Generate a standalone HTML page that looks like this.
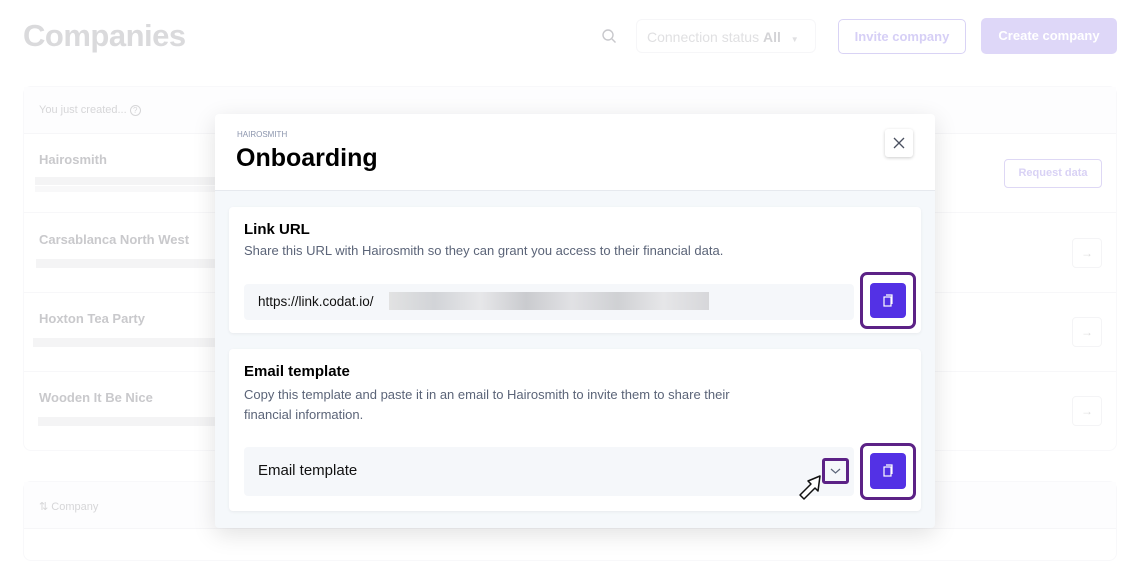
<!DOCTYPE html>
<html><head><style>
*{box-sizing:border-box;margin:0;padding:0}
body{width:1142px;height:547px;overflow:hidden;background:#fff;font-family:"Liberation Sans",sans-serif;position:relative}
.a{position:absolute}
.blur{background:#ececef;opacity:.6}
</style></head><body>
<div class="a" style="left:23px;top:18px;font-size:31px;font-weight:bold;color:#dadadc;letter-spacing:-0.5px">Companies</div>
<svg class="a" style="left:601px;top:28px" width="16" height="16" viewBox="0 0 16 16"><circle cx="7" cy="7" r="5" fill="none" stroke="#c8c8cc" stroke-width="1.4"/><path d="M11 11l3.5 3.5" stroke="#c8c8cc" stroke-width="1.4"/></svg>
<div class="a" style="left:636px;top:19px;width:180px;height:34px;border:1px solid #f6f6f8;border-radius:6px;font-size:14px;color:#e0e0e2;padding:9px 10px">Connection status <b style="color:#d3d3d6">All</b> <span style="font-size:8px;margin-left:6px">▼</span></div>
<div class="a" style="left:838px;top:19px;width:128px;height:35px;border:1px solid #d9d3f5;border-radius:5px;font-size:13px;font-weight:bold;color:#d6cff6;text-align:center;line-height:33px">Invite company</div>
<div class="a" style="left:981px;top:18px;width:136px;height:36px;background:#ded7f8;border-radius:5px;font-size:13px;font-weight:bold;color:#fff;text-align:center;line-height:36px">Create company</div>

<div class="a" style="left:23px;top:86px;width:1094px;height:365px;border:1px solid #f8f8fa;border-radius:8px">
 <div style="height:47px;border-bottom:1px solid #f6f6f8;background:#fdfdfe;font-size:11px;color:#d6d6d8;padding:17px 15px">You just created... <span style="display:inline-block;width:11px;height:11px;border:1px solid #d6d6d8;border-radius:50%;font-size:8px;text-align:center;line-height:9px">?</span></div>
</div>
<div class="a" style="left:39px;top:152px;font-size:13px;font-weight:bold;color:#c9c9cc">Hairosmith</div>
<div class="a blur" style="left:35px;top:177px;width:180px;height:8px"></div>
<div class="a blur" style="left:35px;top:186px;width:180px;height:6px;opacity:.35"></div>
<div class="a" style="left:24px;top:212px;width:1092px;border-top:1px solid #f7f7f9"></div>
<div class="a" style="left:39px;top:232px;font-size:13px;font-weight:bold;color:#c9c9cc">Carsablanca North West</div>
<div class="a blur" style="left:36px;top:259px;width:180px;height:9px"></div>
<div class="a" style="left:24px;top:292px;width:1092px;border-top:1px solid #f7f7f9"></div>
<div class="a" style="left:39px;top:311px;font-size:13px;font-weight:bold;color:#c9c9cc">Hoxton Tea Party</div>
<div class="a blur" style="left:33px;top:338px;width:182px;height:9px"></div>
<div class="a" style="left:24px;top:371px;width:1092px;border-top:1px solid #f7f7f9"></div>
<div class="a" style="left:39px;top:390px;font-size:13px;font-weight:bold;color:#c9c9cc">Wooden It Be Nice</div>
<div class="a blur" style="left:38px;top:417px;width:178px;height:9px"></div>
<div class="a" style="left:1004px;top:159px;width:98px;height:29px;border:1px solid #ded8f5;border-radius:4px;font-size:11px;font-weight:bold;color:#d9d2f5;text-align:center;line-height:27px">Request data</div>
<div class="a" style="left:1072px;top:238px;width:30px;height:30px;border:1px solid #f4f4f6;border-radius:4px;color:#ddd;text-align:center;line-height:28px;font-size:12px">→</div>
<div class="a" style="left:1072px;top:317px;width:30px;height:30px;border:1px solid #f4f4f6;border-radius:4px;color:#ddd;text-align:center;line-height:28px;font-size:12px">→</div>
<div class="a" style="left:1072px;top:396px;width:30px;height:30px;border:1px solid #f4f4f6;border-radius:4px;color:#ddd;text-align:center;line-height:28px;font-size:12px">→</div>
<div class="a" style="left:23px;top:481px;width:1094px;height:80px;border:1px solid #f8f8fa;border-radius:8px">
 <div style="height:47px;border-bottom:1px solid #f6f6f8;background:#fdfdfe;font-size:11px;color:#d6d6d8;padding:18px 15px">⇅ Company</div>
</div>

<div class="a" style="left:215px;top:114px;width:720px;height:414px;background:#f5f8fb;border-radius:4px;box-shadow:0 6px 24px rgba(0,0,0,.12);overflow:hidden">
 <div style="height:77px;background:#fff;border-bottom:1px solid #e6e9ee;position:relative">
  <div class="a" style="left:22px;top:16px;font-size:8px;color:#8b95ad">HAIROSMITH</div>
  <div class="a" style="left:21px;top:30px;font-size:25px;font-weight:bold;color:#000">Onboarding</div>
  <div class="a" style="left:670px;top:15px;width:28px;height:28px;border-radius:3px;box-shadow:0 1px 3px rgba(0,0,0,.2);background:#fff"><svg width="28" height="28"><path d="M9 9l10 10M19 9L9 19" stroke="#4a5060" stroke-width="1.3"/></svg></div>
 </div>
 <div class="a" style="left:14px;top:93px;width:692px;height:126px;background:#fff;border-radius:4px;box-shadow:0 1px 3px rgba(0,0,0,.06)">
  <div class="a" style="left:15px;top:14px;font-size:15px;font-weight:bold;color:#000">Link URL</div>
  <div class="a" style="left:15px;top:36px;font-size:13px;color:#5b6478">Share this URL with Hairosmith so they can grant you access to their financial data.</div>
  <div class="a" style="left:15px;top:77px;width:610px;height:36px;background:#f5f7fa;border-radius:4px;font-size:13.5px;color:#111;padding:10px 14px">https://link.codat.io/</div>
  <div class="a" style="left:160px;top:85px;width:320px;height:18px;background:linear-gradient(90deg,#ddd,#c9cbcf,#e3e3e5,#bfc0c4,#dcdcdf,#c6c7ca,#e2e2e4,#cfcfd2);opacity:.8"></div>
  <div class="a" style="left:631px;top:65px;width:56px;height:57px;border:3px solid #5c2286;border-radius:7px"></div>
  <div class="a" style="left:641px;top:76px;width:36px;height:35px;background:#5331e5;border-radius:4px"><svg width="36" height="35"><rect x="14" y="14" width="7" height="9" fill="none" stroke="#fff" stroke-width="1.2"/><path d="M16 12h6v9" fill="none" stroke="#fff" stroke-width="1.2"/></svg></div>
 </div>
 <div class="a" style="left:14px;top:235px;width:692px;height:162px;background:#fff;border-radius:4px;box-shadow:0 1px 3px rgba(0,0,0,.06)">
  <div class="a" style="left:15px;top:14px;font-size:15px;font-weight:bold;color:#000">Email template</div>
  <div class="a" style="left:15px;top:36px;width:525px;font-size:13px;line-height:20px;color:#5b6478">Copy this template and paste it in an email to Hairosmith to invite them to share their financial information.</div>
  <div class="a" style="left:15px;top:98px;width:610px;height:49px;background:#f5f7fa;border-radius:4px;font-size:15px;color:#111;padding:15px 14px">Email template</div>
  <div class="a" style="left:593px;top:109px;width:27px;height:26px;border:3px solid #5c2286;border-radius:3px"><svg width="21" height="20"><path d="M6 8l4.5 4 4.5-4" fill="none" stroke="#5b6478" stroke-width="1.2"/></svg></div>
  <svg class="a" style="left:568px;top:124px" width="28" height="30"><path d="M23 3L11 8l3 3L3 22l4 4 11-11 3 3z" fill="#fff" stroke="#111" stroke-width="1.5" stroke-linejoin="round"/></svg>
  <div class="a" style="left:631px;top:94px;width:56px;height:57px;border:3px solid #5c2286;border-radius:7px"></div>
  <div class="a" style="left:641px;top:104px;width:36px;height:36px;background:#5331e5;border-radius:4px"><svg width="36" height="36"><rect x="14" y="14" width="7" height="9" fill="none" stroke="#fff" stroke-width="1.2"/><path d="M16 12h6v9" fill="none" stroke="#fff" stroke-width="1.2"/></svg></div>
 </div>
</div>
</body></html>
